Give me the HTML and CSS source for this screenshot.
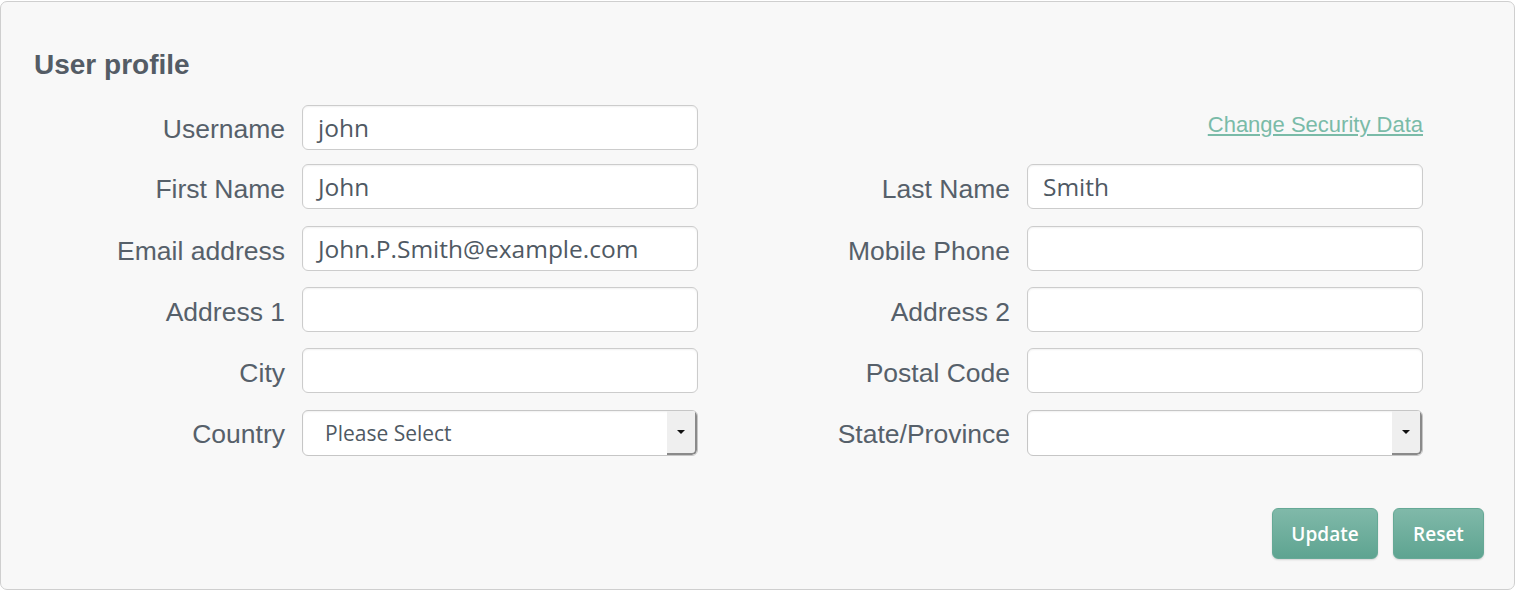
FILE: index.html
```html
<!DOCTYPE html>
<html lang="en">
<head>
<meta charset="utf-8">
<title>User profile</title>
<link rel="stylesheet" href="styles.css">
</head>
<body>
<div class="panel">
  <h1 class="title">User profile</h1>
  <form class="form">
    <label class="label">Username</label>
    <div class="field field-first">john</div>
    <div class="link-cell"><a class="link" href="#">Change Security Data</a></div>

    <label class="label">First Name</label>
    <div class="field">John</div>
    <label class="label">Last Name</label>
    <div class="field">Smith</div>

    <label class="label">Email address</label>
    <div class="field">John.P.Smith@example.com</div>
    <label class="label">Mobile Phone</label>
    <div class="field"></div>

    <label class="label">Address 1</label>
    <div class="field"></div>
    <label class="label">Address 2</label>
    <div class="field"></div>

    <label class="label">City</label>
    <div class="field"></div>
    <label class="label">Postal Code</label>
    <div class="field"></div>

    <label class="label">Country</label>
    <div class="select"><span class="select-text">Please Select</span><span class="arrow"></span></div>
    <label class="label">State/Province</label>
    <div class="select"><span class="select-text"></span><span class="arrow"></span></div>
  </form>
  <div class="actions">
    <button class="btn btn-update" type="button">Update</button>
    <button class="btn btn-reset" type="button">Reset</button>
  </div>
</div>
</body>
</html>
```
FILE: styles.css
```css
html, body {
  margin: 0;
  padding: 0;
  background: #ffffff;
}
body {
  padding: 1px 1px 0 0;
  font-family: "Liberation Sans", Arial, sans-serif;
}
.panel {
  box-sizing: border-box;
  height: 589px;
  background: #f8f8f8;
  border: 1px solid #cfcfcf;
  border-radius: 7px;
  padding: 47px 30px 0 33px;
}
.title {
  margin: 0 0 24px 0;
  font-size: 28px;
  line-height: 32px;
  font-weight: bold;
  color: #545c65;
}
.form {
  display: grid;
  grid-template-columns: 252px 396px 297px 396px;
  grid-template-rows: 43px repeat(5, 45px);
  column-gap: 16px;
  row-gap: 16.25px;
  align-items: center;
}
.label {
  text-align: right;
  font-size: 26.5px;
  line-height: 30px;
  padding-top: 5px;
  padding-right: 1px;
  color: #56606a;
  white-space: nowrap;
}
.field, .select {
  box-sizing: border-box;
  height: 45px;
  background: #ffffff;
  border: 1px solid #cccccc;
  border-radius: 6px;
  box-shadow: inset 0 1px 2px rgba(0,0,0,0.06);
  font-family: "Open Sans", sans-serif;
  font-size: 24.5px;
  line-height: 43px;
  color: #4f5963;
  padding-left: 15px;
}
.field-first {
  align-self: start;
}
.link-cell {
  grid-column: 3 / 5;
  display: flex;
  justify-content: flex-end;
  align-items: center;
  padding-bottom: 4px;
}
.link {
  font-size: 22px;
  color: #7abba8;
  text-decoration: underline;
}
.select {
  display: flex;
  align-self: start;
  margin-top: 1px;
  padding-left: 22px;
  overflow: hidden;
  height: 46px;
  border-color: #c6c6c6;
}
.select-text {
  flex: 1;
  font-size: 21px;
  line-height: 44px;
}
.arrow {
  width: 28px;
  background: #efefef;
  border-right: 2px solid #8a8a8a;
  border-bottom: 2px solid #8a8a8a;
  border-bottom-right-radius: 5px;
  display: flex;
  align-items: center;
  justify-content: center;
}
.arrow::before {
  content: "";
  border-left: 4px solid transparent;
  border-right: 4px solid transparent;
  border-top: 4px solid #111;
}
.actions {
  display: flex;
  justify-content: flex-end;
  gap: 15px;
  margin-top: 54px;
}
.btn {
  height: 51px;
  border: 1px solid #66a996;
  border-radius: 6px;
  background: linear-gradient(#80b9a9, #5ea491);
  box-shadow: 0 1px 2px rgba(0,0,0,0.15);
  color: #ffffff;
  font-family: "Open Sans", sans-serif;
  font-weight: 600;
  font-size: 19px;
  padding: 0;
}
.btn-update { width: 106px; }
.btn-reset { width: 91px; }
```
